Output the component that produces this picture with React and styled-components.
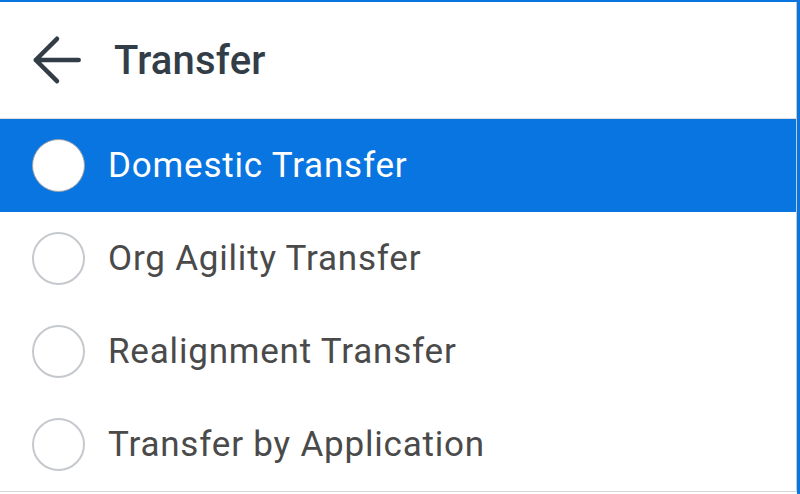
import React, { useState } from 'react';
import styled, { createGlobalStyle } from 'styled-components';

const GlobalStyle = createGlobalStyle`
  html, body {
    margin: 0;
    padding: 0;
    background: #ffffff;
  }
  body {
    font-family: Roboto, "Liberation Sans", Arial, sans-serif;
  }
`;

const Frame = styled.div`
  width: 800px;
  height: 494px;
  box-sizing: border-box;
  border-top: 2px solid #0875e1;
  border-right: 3px solid #0875e1;
  background: #ffffff;
`;

const Panel = styled.div`
  display: flex;
  flex-direction: column;
  border-right: 1px solid #c8c8c8;
  border-bottom: 1px solid #d4d6d8;
`;

const Header = styled.div`
  display: flex;
  align-items: center;
  height: 116px;
  padding-left: 31px;
  gap: 31px;
  border-bottom: 1px solid #dcdcdc;
`;

const BackButton = styled.button`
  display: flex;
  align-items: center;
  justify-content: center;
  padding: 0;
  border: none;
  background: transparent;
  color: #333d47;
  cursor: pointer;
`;

const Title = styled.h1`
  margin: 0;
  font-size: 40px;
  font-weight: 500;
  color: #333d47;
  letter-spacing: 0.2px;
`;

const List = styled.ul`
  list-style: none;
  margin: 0;
  padding: 0;
`;

const Row = styled.li`
  display: flex;
  align-items: center;
  height: 93px;
  padding-left: 32px;
  gap: 23px;
  background: ${p => (p.selected ? '#0875e1' : '#ffffff')};
  color: ${p => (p.selected ? '#ffffff' : '#4a4a4a')};
  cursor: pointer;
`;

const Radio = styled.span`
  flex: none;
  box-sizing: border-box;
  width: 53px;
  height: 53px;
  border-radius: 50%;
  background: #ffffff;
  border: ${p => (p.selected ? '1px solid #9aa0a6' : '2px solid #c5c9ce')};
`;

const Label = styled.span`
  font-size: 35px;
  font-weight: 400;
  letter-spacing: 0.8px;
`;

const options = [
  'Domestic Transfer',
  'Org Agility Transfer',
  'Realignment Transfer',
  'Transfer by Application'
];

export default function App() {
  const [selected, setSelected] = useState(0);

  return (
    <>
      <GlobalStyle />
      <Frame>
        <Panel>
          <Header>
            <BackButton aria-label="Back">
              <svg width="52" height="52" viewBox="0 0 24 24" fill="none">
                <path
                  d="M22 12H2.2M12 2.2L2.2 12l9.8 9.8"
                  stroke="currentColor"
                  strokeWidth="2.1"
                  strokeLinecap="round"
                  strokeLinejoin="round"
                />
              </svg>
            </BackButton>
            <Title>Transfer</Title>
          </Header>
          <List>
            {options.map((label, idx) => (
              <Row key={label} selected={idx === selected} onClick={() => setSelected(idx)}>
                <Radio selected={idx === selected} />
                <Label>{label}</Label>
              </Row>
            ))}
          </List>
        </Panel>
      </Frame>
    </>
  );
}
